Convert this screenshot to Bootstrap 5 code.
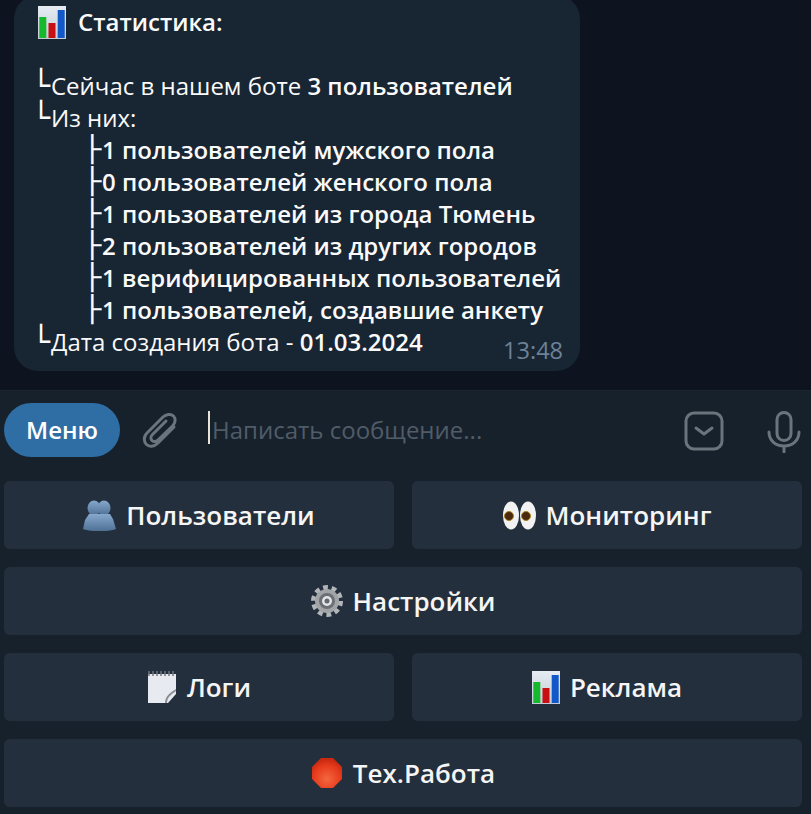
<!DOCTYPE html>
<html lang="ru">
<head>
    <meta charset="UTF-8">
    <meta name="viewport" content="width=device-width, initial-scale=1.0">
    <title>Статистика</title>
    <link rel="stylesheet" href="https://cdn.jsdelivr.net/npm/bootstrap@5.3.0/dist/css/bootstrap.min.css">
    <style>
        html, body { height: 814px; overflow: hidden; }
        body { background: #0e1621; font-family: "Open Sans", "DejaVu Sans", sans-serif; color: #f5f5f5; }
        .chat-area { height: 390px; padding-left: 14px; background: #0d141f; display: flow-root; overflow: hidden; }
        .bubble { width: 566px; height: 376px; margin-top: -5px; background: #182533; border-radius: 24px; padding: 11px 0 0 24px; position: relative; font-size: 24px; line-height: 32px; color: #fafafa; }
        .bubble-line { white-space: pre; display: flex; align-items: center; height: 32px; }
        .bubble-title { gap: 12px; margin-bottom: 32px; height: 32px; font-weight: 600; }
        .sub-line { padding-left: 51px; font-weight: 600; }
        .bold-part { font-weight: 600; }
        .tree { font-family: "DejaVu Sans", sans-serif; font-size: 30px; font-weight: 400; width: 19px; margin-left: -6px; flex: none; }
        .sub-line .tree { transform: scaleY(.85); }
        .msg-time { position: absolute; right: 17px; bottom: 8px; font-size: 23.5px; line-height: 26px; color: #6d8296; }
        .input-bar { height: 81px; background: #17212b; border-top: 1px solid #1b2631; padding: 12px 10px 0 4px; }
        .menu-btn { width: 116px; height: 54px; border-radius: 27px; background: #2f6ea5; color: #fff; font-size: 24px; font-weight: 600; line-height: 54px; text-align: center; }
        .clip-icon { margin-left: 22px; width: 38px; height: 38px; }
        .caret-bar { width: 2px; height: 33px; background: #e8e4d8; margin-left: 28px; }
        .placeholder-text { font-size: 24px; color: #505c68; margin-left: 2px; line-height: 37px; }
        .box-icon { margin-right: 43px; }
        .panel-area { background: #17212b; height: 343px; padding: 10px 9px 0 4px; gap: 18px; }
        .key-row { gap: 18px; }
        .key-btn { flex: 1 1 0; height: 68px; border-radius: 6px; background: #242f3d; color: #f5f5f5; font-size: 26px; font-weight: 600; gap: 10px; }
    </style>
</head>
<body>
    <svg width="0" height="0" class="d-block">
        <defs>
            <linearGradient id="barBg" x1="0" y1="0" x2="0" y2="1"><stop offset="0" stop-color="#e6ecf2"/><stop offset="1" stop-color="#c3ccd6"/></linearGradient>
            <symbol id="chart" viewBox="0 0 28 33">
                <rect width="28" height="33" fill="url(#barBg)"/>
                <rect x="1.3" y="11" width="7" height="21" fill="#16b82c"/>
                <rect x="10.500" y="17" width="7" height="15" fill="#c80f14"/>
                <rect x="19.700" y="4" width="7" height="28" fill="#1258c8"/>
            </symbol>
        </defs>
    </svg>

    <div class="chat-area">
        <div class="bubble">
            <div class="bubble-line bubble-title d-flex"><svg width="28" height="33"><use href="#chart"/></svg><span>Статистика:</span></div>
            <div class="bubble-line"><span class="tree">└</span>Сейчас в нашем боте <span class="bold-part">3 пользователей</span></div>
            <div class="bubble-line"><span class="tree">└</span>Из них:</div>
            <div class="bubble-line sub-line"><span class="tree">├</span>1 пользователей мужского пола</div>
            <div class="bubble-line sub-line"><span class="tree">├</span>0 пользователей женского пола</div>
            <div class="bubble-line sub-line"><span class="tree">├</span>1 пользователей из города Тюмень</div>
            <div class="bubble-line sub-line"><span class="tree">├</span>2 пользователей из других городов</div>
            <div class="bubble-line sub-line"><span class="tree">├</span>1 верифицированных пользователей</div>
            <div class="bubble-line sub-line"><span class="tree">├</span>1 пользователей, создавшие анкету</div>
            <div class="bubble-line"><span class="tree">└</span>Дата создания бота - <span class="bold-part">01.03.2024</span></div>
            <span class="msg-time">13:48</span>
        </div>
    </div>

    <div class="input-bar d-flex align-items-start">
        <div class="menu-btn flex-shrink-0">Меню</div>
        <svg class="clip-icon flex-shrink-0 mt-2" viewBox="0 0 38 38" fill="none" stroke="#6b747d" stroke-width="3" stroke-linecap="round"><path d="M32 16 16 32c-4 4-9 4-11.500 1.500S1 26 5 22L21 6c3-3 8-3.500 10.500-1s2 7-1 10L16 29c-2 2-4.500 2-6 .5s-1.500-4 .5-6L24 10"/></svg>
        <div class="caret-bar flex-shrink-0 mt-2"></div>
        <div class="placeholder-text flex-grow-1 mt-1 pt-1">Написать сообщение...</div>
        <svg class="box-icon flex-shrink-0 mt-2" width="40" height="40" viewBox="0 0 40 40" fill="none" stroke="#6b747d" stroke-width="3" stroke-linecap="round" stroke-linejoin="round"><rect x="2" y="2" width="36" height="36" rx="8"/><path d="m12 17 8 6 8-6"/></svg>
        <svg class="flex-shrink-0 mt-2" width="34" height="42" viewBox="0 0 34 42" fill="none" stroke="#6b747d" stroke-width="3" stroke-linecap="round"><rect x="10" y="1.500" width="14" height="28" rx="7"/><path d="M2 21c0 9 7 14 15 14s15-5 15-14M17 35v6"/></svg>
    </div>

    <div class="panel-area d-flex flex-column">
        <div class="key-row d-flex">
            <div class="key-btn d-flex align-items-center justify-content-center">
                <svg width="33" height="32" viewBox="0 0 33 32"><defs><linearGradient id="userFill" x1="0" y1="0" x2="0" y2="1"><stop offset="0" stop-color="#86a8cc"/><stop offset="1" stop-color="#4d7094"/></linearGradient></defs><ellipse cx="11" cy="9" rx="6.500" ry="7.500" fill="url(#userFill)"/><ellipse cx="21" cy="9" rx="6.500" ry="7.500" fill="url(#userFill)"/><path d="M6 15h21l3 5 3 10c-8 3-25 3-33 0l2-9z" fill="url(#userFill)"/></svg>
                <span>Пользователи</span>
            </div>
            <div class="key-btn d-flex align-items-center justify-content-center">
                <svg width="33" height="29" viewBox="0 0 33 29"><ellipse cx="8" cy="14.500" rx="8" ry="14" fill="#f2f2f2"/><ellipse cx="25" cy="14.500" rx="8" ry="14" fill="#f2f2f2"/><circle cx="6" cy="15" r="4.500" fill="#4b2a10" stroke="#a8821c"/><circle cx="23" cy="15" r="4.500" fill="#4b2a10" stroke="#a8821c"/></svg>
                <span>Мониторинг</span>
            </div>
        </div>
        <div class="key-row d-flex">
            <div class="key-btn d-flex align-items-center justify-content-center">
                <svg width="32" height="32" viewBox="0 0 32 32"><circle cx="16" cy="16" r="13" fill="none" stroke="#b3b6b8" stroke-width="6" stroke-dasharray="4.500 3.670"/><circle cx="16" cy="16" r="12" fill="#a2a5a8"/><circle cx="16" cy="16" r="8" fill="#6c7074"/><circle cx="16" cy="16" r="5" fill="#e3e5e6"/><circle cx="16" cy="16" r="2.500" fill="#666a6e"/></svg>
                <span>Настройки</span>
            </div>
        </div>
        <div class="key-row d-flex">
            <div class="key-btn d-flex align-items-center justify-content-center">
                <svg width="30" height="32" viewBox="0 0 30 32"><path d="M1 3h28v20l-8 9H1z" fill="#e7eaf0"/><path d="M2 0v5M6 0v5M10 0v5M14 0v5M18 0v5M22 0v5M26 0v5" stroke="#70757c" stroke-width="1.500"/><path d="M29 20c-4 3-9 6-9 12h-2c0-7 6-11 11-14z" fill="#8a8d92"/></svg>
                <span>Логи</span>
            </div>
            <div class="key-btn d-flex align-items-center justify-content-center">
                <svg width="28" height="33"><use href="#chart"/></svg>
                <span>Реклама</span>
            </div>
        </div>
        <div class="key-row d-flex">
            <div class="key-btn d-flex align-items-center justify-content-center">
                <svg width="32" height="32" viewBox="0 0 32 32"><defs><radialGradient id="stopFill" cx=".5" cy=".7" r=".65"><stop offset="0" stop-color="#f4683f"/><stop offset=".7" stop-color="#e63a1c"/><stop offset="1" stop-color="#c92a10"/></radialGradient></defs><path d="M10 1h12l9 9v12l-9 9H10l-9-9V10z" fill="url(#stopFill)"/></svg>
                <span>Тех.Работа</span>
            </div>
        </div>
    </div>

    <script src="https://cdn.jsdelivr.net/npm/bootstrap@5.3.0/dist/js/bootstrap.bundle.min.js"></script>
</body>
</html>
